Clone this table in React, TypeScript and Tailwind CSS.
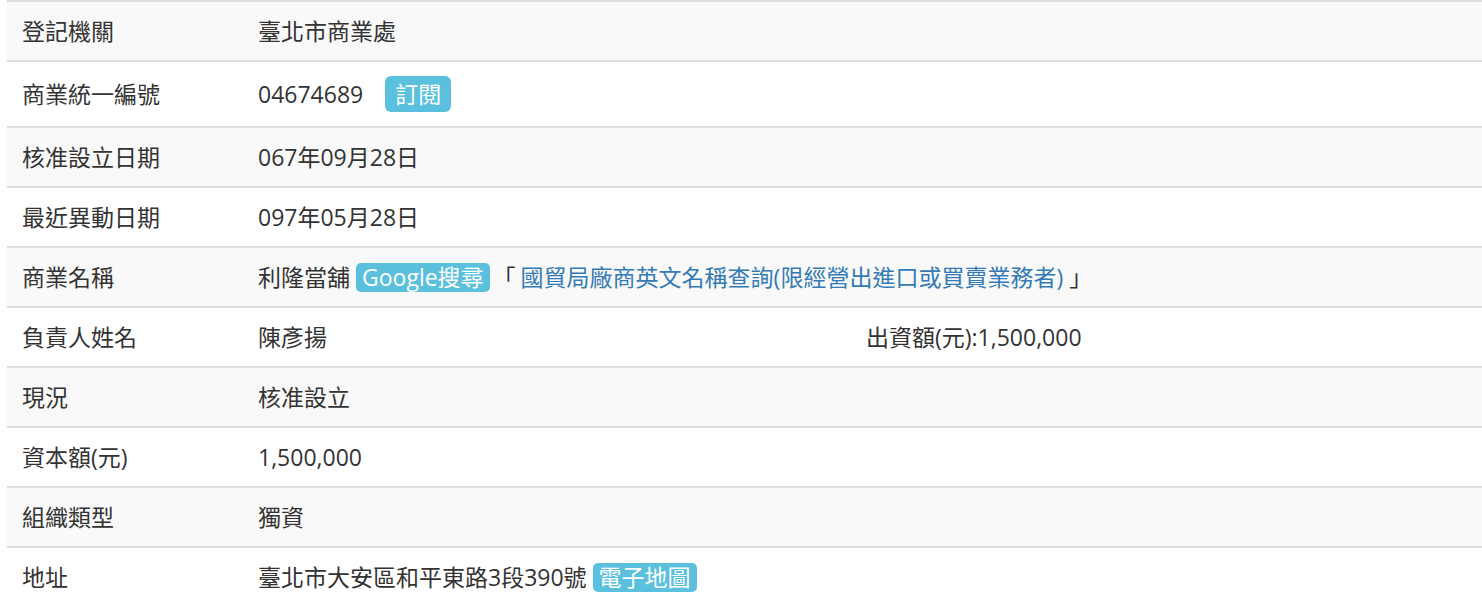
const FONT = "font-['Open_Sans','Noto_Sans_CJK_TC',sans-serif]";

function Row({
  label,
  striped,
  tall,
  children,
}: {
  label: string;
  striped?: boolean;
  tall?: boolean;
  children: React.ReactNode;
}) {
  return (
    <div
      className={`grid grid-cols-[236px_1fr] border-t-2 border-[#dddddd] ${
        striped ? "bg-[#f9f9f9]" : "bg-white"
      } ${tall ? "h-[66px]" : "h-[60px]"}`}
    >
      <div className="flex items-center px-[15px]">{label}</div>
      <div className="flex items-center px-[15px]">{children}</div>
    </div>
  );
}

function Badge({ children, big }: { children: React.ReactNode; big?: boolean }) {
  return (
    <span
      className={`inline-flex items-center justify-center bg-[#5bc0de] text-white ${
        big ? "h-[36px] px-[10px] rounded-[6px]" : "h-[29px] px-[6px] rounded-[5px]"
      }`}
    >
      {children}
    </span>
  );
}

export default function App() {
  return (
    <div className={`${FONT} text-[23px] leading-none text-[#333333] bg-white min-h-screen pl-[7px] overflow-hidden`}>
      <div className="w-full">
        <Row label="登記機關" striped>
          臺北市商業處
        </Row>
        <Row label="商業統一編號" tall>
          <span>04674689</span>
          <span className="ml-[22px]">
            <Badge big>訂閱</Badge>
          </span>
        </Row>
        <Row label="核准設立日期" striped>
          067年09月28日
        </Row>
        <Row label="最近異動日期">097年05月28日</Row>
        <Row label="商業名稱" striped>
          <span>利隆當舖</span>
          <span className="ml-[6px]">
            <Badge>Google搜尋</Badge>
          </span>
          <span className="ml-[3px]">「</span>
          <a href="#" className="text-[#337ab7] ml-[5px]">
            國貿局廠商英文名稱查詢(限經營出進口或買賣業務者)
          </a>
          <span className="ml-[6px]">」</span>
        </Row>
        <div className="grid grid-cols-[236px_608px_1fr] border-t-2 border-[#dddddd] bg-white h-[60px]">
          <div className="flex items-center px-[15px]">負責人姓名</div>
          <div className="flex items-center px-[15px]">陳彥揚</div>
          <div className="flex items-center px-[15px]">出資額(元):1,500,000</div>
        </div>
        <Row label="現況" striped>
          核准設立
        </Row>
        <Row label="資本額(元)">1,500,000</Row>
        <Row label="組織類型" striped>
          獨資
        </Row>
        <Row label="地址">
          <span>臺北市大安區和平東路3段390號</span>
          <span className="ml-[6px]">
            <Badge>電子地圖</Badge>
          </span>
        </Row>
      </div>
    </div>
  );
}
